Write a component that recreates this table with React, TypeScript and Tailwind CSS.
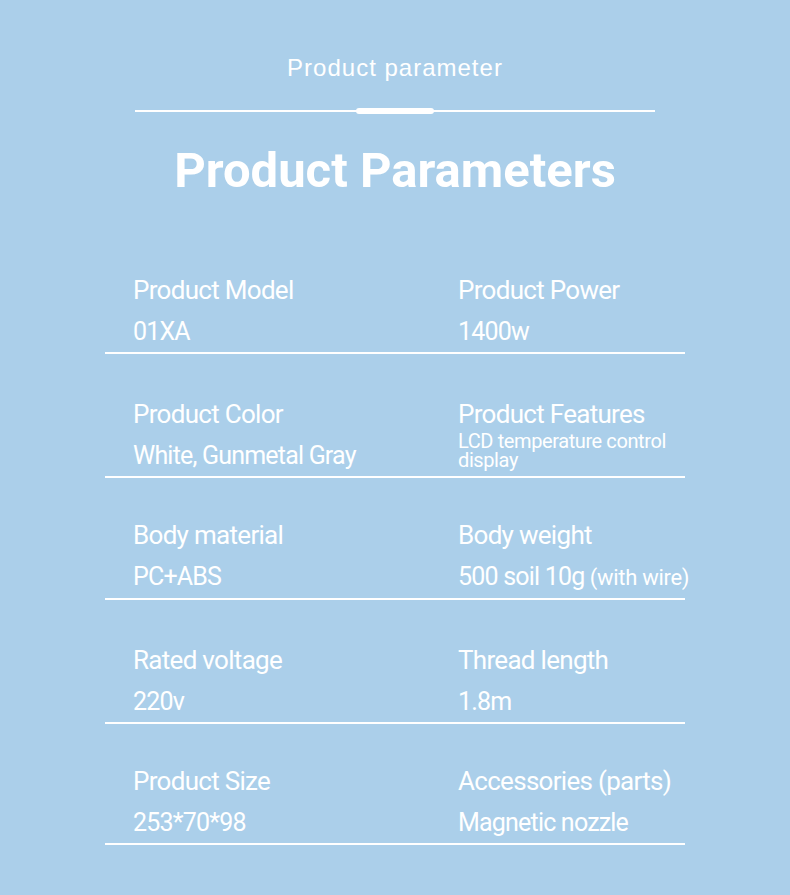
import React from "react";

type Param = { label: string; value: React.ReactNode; small?: boolean };

const rows: { gap: string; left: Param; right: Param }[] = [
  {
    gap: "mt-[75px]",
    left: { label: "Product Model", value: "01XA" },
    right: { label: "Product Power", value: "1400w" },
  },
  {
    gap: "mt-[44px]",
    left: { label: "Product Color", value: "White, Gunmetal Gray" },
    right: {
      label: "Product Features",
      value: "LCD temperature control display",
      small: true,
    },
  },
  {
    gap: "mt-[41px]",
    left: { label: "Body material", value: "PC+ABS" },
    right: {
      label: "Body weight",
      value: (
        <>
          500 soil 10g{" "}
          <span className="text-[22px] tracking-[-0.3px]">(with wire)</span>
        </>
      ),
    },
  },
  {
    gap: "mt-[44px]",
    left: { label: "Rated voltage", value: "220v" },
    right: { label: "Thread length", value: "1.8m" },
  },
  {
    gap: "mt-[41px]",
    left: { label: "Product Size", value: "253*70*98" },
    right: { label: "Accessories (parts)", value: "Magnetic nozzle" },
  },
];

function Cell({ item }: { item: Param }) {
  return (
    <div className="flex flex-col">
      <span className="text-[26px] leading-[32px] tracking-[-0.7px] whitespace-nowrap">
        {item.label}
      </span>
      {item.small ? (
        <span className="mt-[2px] w-[225px] text-[20px] leading-[19px] tracking-[-0.4px]">
          {item.value}
        </span>
      ) : (
        <span className="mt-[10px] text-[25px] leading-[32px] tracking-[-0.8px] whitespace-nowrap">
          {item.value}
        </span>
      )}
    </div>
  );
}

export default function App() {
  return (
    <div className="min-h-[895px] w-full bg-[#abcfea] flex flex-col items-center pt-[52px] text-white font-['Roboto',sans-serif]">
      {/* Small heading */}
      <p className="font-['Liberation_Sans',Arial,sans-serif] text-[24px] leading-[32px] tracking-[1px]">
        Product parameter
      </p>

      {/* Divider */}
      <div className="relative mt-[26px] h-[2px] w-[520px] bg-white">
        <div className="absolute left-1/2 top-1/2 h-[6px] w-[78px] -translate-x-1/2 -translate-y-1/2 rounded-full bg-white" />
      </div>

      <h1 className="mt-[31px] text-[49px] font-bold leading-[56px]">
        Product Parameters
      </h1>

      {/* Parameter rows */}
      <div className="w-[580px] flex flex-col">
        {rows.map((row) => (
          <div
            key={row.left.label}
            className={`${row.gap} grid grid-cols-[325px_1fr] border-b-2 border-white pl-[28px] pb-[4px]`}
          >
            <Cell item={row.left} />
            <Cell item={row.right} />
          </div>
        ))}
      </div>
    </div>
  );
}
